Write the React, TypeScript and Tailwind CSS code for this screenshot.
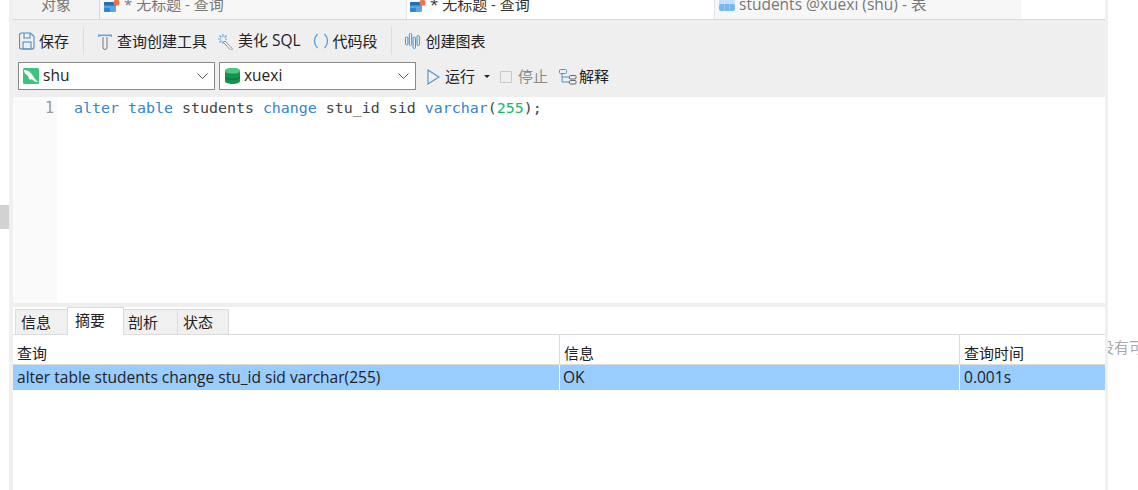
const ui = { fontFamily: '"Open Sans", "Noto Sans CJK SC", sans-serif' };

function TableDotIcon() {
  return (
    <svg width="17" height="14" viewBox="0 0 17 14" className="shrink-0">
      <rect x="0" y="2" width="12" height="10" rx="1.500" fill="#5aa5e0" />
      <rect x="0" y="2" width="12" height="3.500" rx="1" fill="#1f6fb5" />
      <rect x="0" y="8" width="6" height="4" rx="1" fill="#2f86cc" />
      <rect x="9.500" y="0" width="6" height="5.500" rx="2" fill="#f0704f" />
    </svg>
  );
}

function SheetIcon() {
  return (
    <svg width="16" height="16" viewBox="0 0 16 16" className="shrink-0">
      <rect x="0" y="0" width="16" height="13" rx="2.500" fill="#c3e1fa" />
      <rect x="0" y="6" width="16" height="7" rx="2.500" fill="#74b8f3" />
      <path d="M5.500 0v13M10.500 0v13" stroke="#d7ebfc" strokeWidth="0.400" />
    </svg>
  );
}

function SaveIcon() {
  return (
    <svg width="16" height="18" viewBox="0 0 16 18" fill="none" stroke="#4f8fc4" strokeWidth="1.100">
      <path d="M2.500 1h9l3.500 3.500v10.500a2 2 0 0 1-2 2h-10.500a2 2 0 0 1-2-2v-12a2 2 0 0 1 2-2z" />
      <path d="M5 1v5h6v-5" />
      <rect x="4" y="10" width="8" height="7" />
    </svg>
  );
}

function HammerIcon() {
  return (
    <svg width="16" height="17" viewBox="0 0 16 17" fill="none">
      <path d="M1 1.500h14v2.500c-2-1-3-1-4.500-1h-5c-1.500 0-2.500 0-4.500 1z" fill="#5aa9e6" />
      <path d="M6 4v10.500a2 2 0 0 0 4 0v-10.500" stroke="#777" strokeWidth="1" />
    </svg>
  );
}

function WandIcon() {
  return (
    <svg width="16" height="17" viewBox="0 0 16 17" fill="none">
      <path d="M5 1v3M5 8v3M0 6h3M7 6h2M1.500 2.500l2 2M8.500 2.500l-2 2M1.500 9.500l2-2" stroke="#5aa9e6" strokeWidth="1.100" />
      <path d="M7 8l7 7.500a1 1 0 0 1-2 1l-6.500-7z" stroke="#888" strokeWidth="1" fill="#fff" />
    </svg>
  );
}

function ParensIcon() {
  return (
    <svg width="16" height="16" viewBox="0 0 16 16" fill="none" stroke="#4a9fe0" strokeWidth="1.300">
      <path d="M4.500 1c-4 4-4 10 0 14M11.500 1c4 4 4 10 0 14" />
    </svg>
  );
}

function ChartIcon() {
  return (
    <svg width="15" height="16" viewBox="0 0 15 16" fill="none" stroke="#3f93d6" strokeWidth="1">
      <rect x="0.500" y="4" width="2.400" height="8" rx="1.200" />
      <rect x="4.300" y="0.500" width="2.400" height="12" rx="1.200" />
      <rect x="8.100" y="4" width="2.400" height="11.500" rx="1.200" />
      <rect x="12" y="2.500" width="2.400" height="10" rx="1.200" />
    </svg>
  );
}

function MysqlIcon() {
  return (
    <svg width="16" height="16" viewBox="0 0 16 16" className="shrink-0">
      <rect width="16" height="16" rx="1.500" fill="#3cc47c" />
      <path d="M1 2c4 0 7 2 9 6 1 2 3 4 5 6-3 0-5-1-6-3-1 1-2 1-3 0 0-2-1-3-2-4-2-1-3-3-3-5z" fill="#fff" />
    </svg>
  );
}

function DbIcon() {
  return (
    <svg width="15" height="16" viewBox="0 0 15 16" className="shrink-0">
      <path d="M0 3c0-4 15-4 15 0v10c0 4-15 4-15 0z" fill="#14934f" />
      <path d="M0 3c0 3.500 15 3.500 15 0c0-4-15-4-15 0z" fill="#4cc77f" />
      <path d="M0 8c0 3.500 15 3.500 15 0v1.500c0 3.500-15 3.500-15 0z" fill="#0d7a3e" />
    </svg>
  );
}

function ExplainIcon() {
  return (
    <svg width="18" height="16" viewBox="0 0 18 16" fill="none" stroke="#4a94cc" strokeWidth="1">
      <rect x="0.500" y="0.500" width="7" height="4" rx="1" />
      <rect x="10.500" y="6.500" width="6.500" height="3.500" rx="1" stroke="#666" />
      <rect x="10.500" y="11.500" width="6.500" height="3.500" rx="1" stroke="#666" />
      <path d="M3 5v8h7M3 8h7" />
    </svg>
  );
}

function Chevron() {
  return (
    <svg width="11" height="6" viewBox="0 0 11 6" fill="none" stroke="#555" strokeWidth="1">
      <path d="M0.500 0.500l5 5 5-5" />
    </svg>
  );
}

function ToolButton({ icon, label, className }: { icon: React.ReactNode; label: React.ReactNode; className?: string }) {
  return (
    <div className={"flex items-center text-[15px] text-[#222] " + (className ?? "")}>
      {icon}
      <span>{label}</span>
    </div>
  );
}

export default function App() {
  return (
    <div className="h-[490px] w-[1138px] overflow-hidden bg-white flex" style={ui}>
      {/* left edge with the splitter handle */}
      <div className="w-[9px] shrink-0 flex flex-col">
        <div className="h-[205px]" />
        <div className="h-[24px] bg-[#d2d2d2]" />
      </div>
      <div className="w-[4px] shrink-0 bg-[#f0f0f0]" />

      <div className="w-[1092px] shrink-0 flex flex-col">
        {/* tab strip */}
        <div className="h-[20px] flex border-b border-[#d9d9d9] overflow-hidden text-[15px] leading-[20px] text-[#777]">
          <div className="w-[87px] bg-[#f3f3f3] border-r border-[#d9d9d9] flex justify-center items-end pb-[5px]">
            <span>对象</span>
          </div>
          <div className="w-[307px] bg-[#f7f7f7] border-r border-[#e5e5e5] flex items-end gap-[3px] pl-[4px] pb-[5px]">
            <TableDotIcon />
            <span>* 无标题 - 查询</span>
          </div>
          <div className="w-[307px] bg-white flex items-end gap-[3px] pl-[3px] pb-[5px] text-[#333]">
            <TableDotIcon />
            <span>* 无标题 - 查询</span>
          </div>
          <div className="w-[307px] bg-[#f7f7f7] border-l border-[#e5e5e5] flex items-end gap-[4px] pl-[4px] pb-[5px]">
            <SheetIcon />
            <span className="text-[15.500px]">students @xuexi (shu) - 表</span>
          </div>
        </div>

        {/* toolbar */}
        <div className="h-[77px] bg-[#efefef] flex flex-col">
          <div className="h-[42px] flex items-center pl-[6px]">
            <ToolButton icon={<SaveIcon />} label="保存" className="gap-[4px]" />
            <div className="w-px h-[28px] bg-[#dcdcdc] ml-[14px] mr-[13px]" />
            <ToolButton icon={<HammerIcon />} label="查询创建工具" className="gap-[4px]" />
            <ToolButton
              icon={<WandIcon />}
              label={<>美化 <span className="text-[15.500px]">SQL</span></>}
              className="ml-[11px] gap-[4px]"
            />
            <ToolButton icon={<ParensIcon />} label="代码段" className="ml-[12px] gap-[4px]" />
            <div className="w-px h-[28px] bg-[#dcdcdc] ml-[13px] mr-[13px]" />
            <ToolButton icon={<ChartIcon />} label="创建图表" className="gap-[6px]" />
          </div>
          <div className="flex items-center pl-[5px] h-[28px]">
            <div className="w-[197px] h-[28px] bg-white border border-[#8a8a8a] flex items-center pl-[4px] pr-[6px] gap-[4px] text-[15.500px] text-[#222]">
              <MysqlIcon />
              <span className="flex-1">shu</span>
              <Chevron />
            </div>
            <div className="w-[197px] h-[28px] ml-[4px] bg-white border border-[#8a8a8a] flex items-center pl-[5px] pr-[6px] gap-[4px] text-[15.500px] text-[#222]">
              <DbIcon />
              <span className="flex-1">xuexi</span>
              <Chevron />
            </div>
            <div className="flex items-center ml-[11px] pt-[1px] text-[15px] text-[#222]">
              <svg width="13" height="16" viewBox="0 0 13 16" fill="none" stroke="#4a94cc" strokeWidth="1.100">
                <path d="M1 1l11 7-11 7z" />
              </svg>
              <span className="ml-[5px]">运行</span>
              <span className="ml-[9px] w-0 h-0 border-x-[3px] border-x-transparent border-t-[3px] border-t-[#222]" />
            </div>
            <div className="flex items-center ml-[10px] pt-[1px] text-[15px] text-[#8a8a8a]">
              <span className="w-[12px] h-[12px] border border-[#c9c9c9] rounded-[1px]" />
              <span className="ml-[6px]">停止</span>
            </div>
            <ToolButton icon={<ExplainIcon />} label="解释" className="ml-[11px] pt-[1px] gap-[2px]" />
          </div>
        </div>

        {/* sql editor */}
        <div className="h-[206px] flex bg-white">
          <div className="w-[44px] bg-[#fafafa] text-right pr-[3px] pt-[1px] font-['DejaVu_Sans_Mono',monospace] text-[15px] leading-[20px] text-[#999]">
            1
          </div>
          <div className="pl-[17px] pt-[1px] font-['DejaVu_Sans_Mono',monospace] text-[14.950px] leading-[20px] text-[#444] whitespace-pre">
            <span className="text-[#3585cc]">alter table</span> students <span className="text-[#3585cc]">change</span> stu_id sid <span className="text-[#3585cc]">varchar</span>(<span className="text-[#22b566]">255</span>);
          </div>
        </div>
        <div className="h-[4px] bg-[#efefef]" />

        {/* result tabs */}
        <div className="h-[28px] flex items-end border-b border-[#dcdcdc] text-[15px] text-[#222] pl-[2px]">
          <div className="w-[52px] h-[25px] flex items-center pl-[5px] bg-[#f0f0f0] border-t border-l border-[#dcdcdc]">信息</div>
          <div className="w-[57px] h-[28px] pl-[7px] bg-white border-x border-t border-[#dcdcdc] -mb-px leading-[24px]">摘要</div>
          <div className="w-[53px] h-[25px] flex items-center pl-[4px] bg-[#f0f0f0] border-t border-[#dcdcdc]">剖析</div>
          <div className="w-[52px] h-[25px] flex items-center pl-[5px] bg-[#f0f0f0] border-x border-t border-[#dcdcdc]">状态</div>
        </div>

        {/* result table */}
        <div className="grid grid-cols-[546px_400px_146px] text-[15px] text-[#222]">
          <div className="h-[30px] pl-[4px] pt-[6px] leading-[24px] border-b border-[#dcdcdc]">查询</div>
          <div className="h-[30px] pl-[4px] pt-[6px] leading-[24px] border-b border-l border-[#dcdcdc]">信息</div>
          <div className="h-[30px] pl-[4px] pt-[6px] leading-[24px] border-b border-l border-[#dcdcdc]">查询时间</div>
          <div className="h-[25px] pl-[4px] leading-[25px] text-[15.550px] bg-[#99ccff] whitespace-nowrap">alter table students change stu_id sid varchar(255)</div>
          <div className="h-[25px] pl-[3px] leading-[25px] text-[15.550px] bg-[#99ccff] border-l border-white">OK</div>
          <div className="h-[25px] pl-[4px] leading-[25px] text-[15.550px] bg-[#99ccff] border-l border-white">0.001s</div>
        </div>
      </div>

      {/* right gutter with clipped text from the panel behind */}
      <div className="w-[3px] shrink-0 bg-[#f0f0f0]" />
      <div className="flex-1 overflow-hidden pt-[336px] text-[15px] text-[#aaa] whitespace-nowrap">
        <span className="block -ml-[9px] leading-[22px]">没有可</span>
      </div>
    </div>
  );
}
